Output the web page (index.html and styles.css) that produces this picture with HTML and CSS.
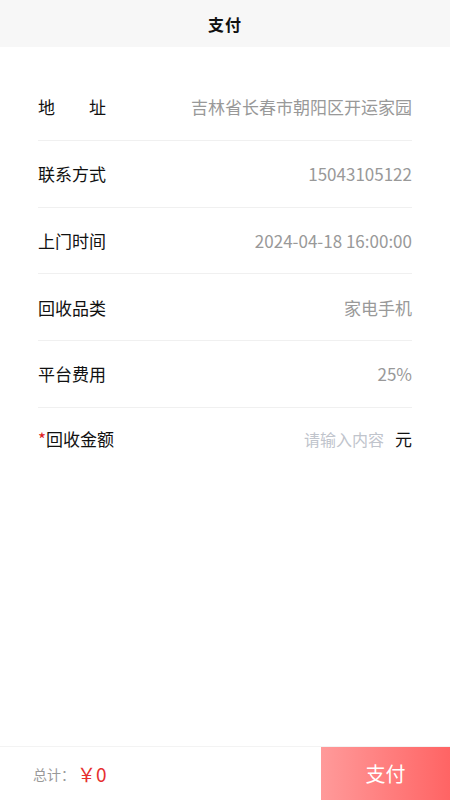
FILE: index.html
```html
<!DOCTYPE html>
<html lang="zh-CN">
<head>
<meta charset="utf-8">
<link rel="stylesheet" href="styles.css">
</head>
<body>
<div class="page">
  <header class="nav"><span class="nav-title">支付</span></header>
  <main class="form">
    <div class="row"><span class="label label-spread"><span>地</span><span>址</span></span><span class="value">吉林省长春市朝阳区开运家园</span></div>
    <div class="row"><span class="label">联系方式</span><span class="value">15043105122</span></div>
    <div class="row"><span class="label">上门时间</span><span class="value">2024-04-18 16:00:00</span></div>
    <div class="row"><span class="label">回收品类</span><span class="value">家电手机</span></div>
    <div class="row"><span class="label">平台费用</span><span class="value">25%</span></div>
    <div class="row row-last"><span class="label"><span class="req">*</span>回收金额</span><span class="input-wrap"><span class="placeholder">请输入内容</span><span class="unit">元</span></span></div>
  </main>
  <footer class="bar">
    <div class="total"><span class="total-label">总计：</span><span class="total-amount">￥0</span></div>
    <button class="pay">支付</button>
  </footer>
</div>
</body>
</html>
```

FILE: styles.css
```css
html, body {
  margin: 0;
  padding: 0;
  background: #fff;
}
body {
  font-family: "Noto Sans CJK SC", "Noto Sans", sans-serif;
}
.page {
  width: 450px;
  height: 800px;
  display: flex;
  flex-direction: column;
}
.nav {
  height: 47px;
  background: #f7f7f7;
  display: flex;
  align-items: center;
  justify-content: center;
  flex-shrink: 0;
}
.nav-title {
  font-size: 16px;
  font-weight: 700;
  color: #111;
  letter-spacing: 1px;
}
.form {
  flex: 1;
  padding: 27px 38px 0;
}
.row {
  height: 65.75px;
  display: flex;
  align-items: center;
  justify-content: space-between;
  border-bottom: 1px solid #f0f0f0;
  font-size: 17px;
}
.row-last {
  border-bottom: none;
  margin-top: -2px;
}
.label {
  color: #111;
  display: flex;
  align-items: center;
}
.label-spread {
  width: 68px;
  justify-content: space-between;
}
.req {
  color: #e02020;
}
.value {
  color: #999;
}
.input-wrap {
  display: flex;
  align-items: center;
  gap: 11px;
}
.placeholder {
  color: #c0c4cc;
  font-size: 16px;
}
.unit {
  color: #111;
  font-size: 17px;
}
.bar {
  height: 53px;
  border-top: 1px solid #f3f3f3;
  display: flex;
  align-items: stretch;
  flex-shrink: 0;
}
.total {
  flex: 1;
  display: flex;
  align-items: center;
  padding-left: 33px;
}
.total-label {
  color: #999;
  font-size: 14px;
}
.total-amount {
  color: #e63030;
  font-size: 19px;
  margin-left: 2px;
}
.pay {
  width: 129px;
  border: none;
  margin: 0;
  padding: 0;
  background: linear-gradient(90deg, #ff9a9a, #ff6464);
  color: #fff;
  font-family: "Noto Sans CJK SC", sans-serif;
  font-size: 20px;
}
```
